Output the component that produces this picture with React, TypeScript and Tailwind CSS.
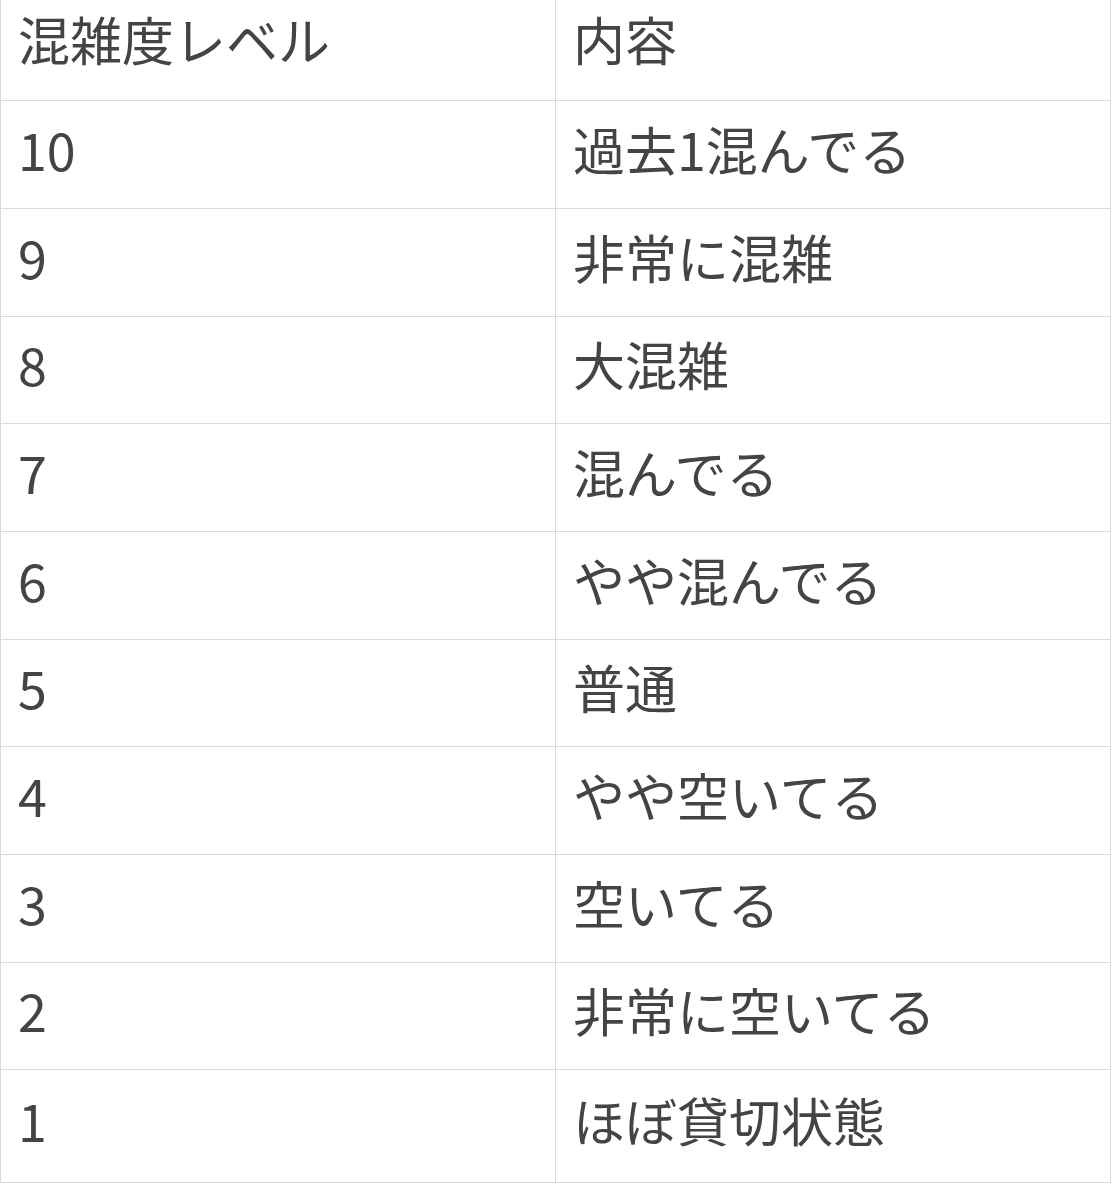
const rows: [string, string, string][] = [
  ["10", "過去1混んでる", "h-[108px]"],
  ["9", "非常に混雑", "h-[108px]"],
  ["8", "大混雑", "h-[107px]"],
  ["7", "混んでる", "h-[108px]"],
  ["6", "やや混んでる", "h-[108px]"],
  ["5", "普通", "h-[107px]"],
  ["4", "やや空いてる", "h-[108px]"],
  ["3", "空いてる", "h-[108px]"],
  ["2", "非常に空いてる", "h-[107px]"],
  ["1", "ほぼ貸切状態", "h-[113px]"],
];

export default function App() {
  return (
    <div
      className="min-h-[1200px] w-[1112px] bg-white text-[52px] leading-none text-[#444444]"
      style={{ fontFamily: '"Noto Sans CJK JP", "Noto Sans", sans-serif' }}
    >
      <div className="w-[1111px]">
        <div className="flex h-[101px] border-b border-[#dadada]">
          <div className="flex w-[555px] items-center border-l border-[#dadada] pb-[22px] pl-[17px]">
            混雑度レベル
          </div>
          <div className="flex flex-1 items-center border-x border-[#dadada] pb-[22px] pl-[17px]">
            内容
          </div>
        </div>
        {rows.map(([level, label, height]) => (
          <div key={level} className={`flex border-b border-[#dadada] ${height}`}>
            <div className="flex w-[555px] items-center border-l border-[#dadada] pb-[12px] pl-[17px]">
              {level}
            </div>
            <div className="flex flex-1 items-center border-x border-[#dadada] pb-[12px] pl-[17px]">
              {label}
            </div>
          </div>
        ))}
      </div>
    </div>
  );
}
